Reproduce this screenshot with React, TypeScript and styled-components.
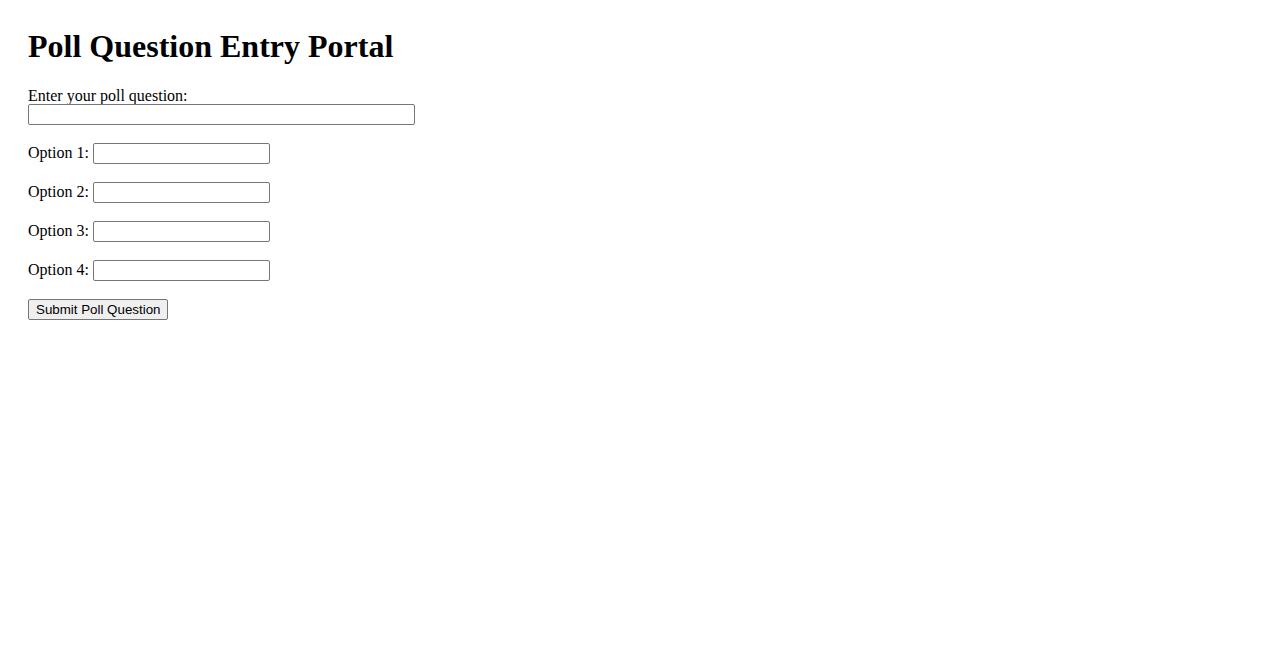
import React from "react";
import styled, { createGlobalStyle } from "styled-components";

const GlobalStyle = createGlobalStyle`
  body {
    margin: 0;
    padding: 28px;
    background: #ffffff;
    color: #000000;
    font-family: "Liberation Serif", "Times New Roman", serif;
    font-size: 16px;
  }
`;

const Page = styled.div`
  display: flex;
  flex-direction: column;
`;

const Title = styled.h1`
  margin: 0 0 22px;
  font-size: 32px;
  font-weight: bold;
  line-height: 37px;
`;

const Form = styled.form`
  display: flex;
  flex-direction: column;
  align-items: flex-start;
  gap: 18px;
`;

const QuestionField = styled.div`
  display: flex;
  flex-direction: column;
  align-items: flex-start;
`;

const Label = styled.label`
  line-height: 17px;
`;

const OptionRow = styled.div`
  display: flex;
  align-items: flex-start;
  gap: 4px;
  height: 21px;

  ${Label} {
    line-height: 20px;
  }
`;

const TextInput = styled.input<{ $wide?: boolean }>`
  box-sizing: border-box;
  width: ${(p) => (p.$wide ? "387px" : "177px")};
  height: 21px;
  padding: 1px 2px;
  border: 1px solid #767676;
  border-radius: 2px;
  background: #ffffff;
  font-family: "Liberation Sans", Arial, sans-serif;
  font-size: 13.33px;
`;

const SubmitButton = styled.button`
  box-sizing: border-box;
  height: 21px;
  padding: 1px 7px;
  border: 1px solid #767676;
  border-radius: 2px;
  background: #efefef;
  color: #000000;
  font-family: "Liberation Sans", Arial, sans-serif;
  font-size: 13.33px;
  line-height: 15px;
`;

const options = [1, 2, 3, 4];

export default function App() {
  return (
    <Page>
      <GlobalStyle />
      <Title>Poll Question Entry Portal</Title>
      <Form onSubmit={(e) => e.preventDefault()}>
        <QuestionField>
          <Label htmlFor="question">Enter your poll question:</Label>
          <TextInput id="question" type="text" $wide />
        </QuestionField>
        {options.map((n) => (
          <OptionRow key={n}>
            <Label htmlFor={`option${n}`}>Option {n}:</Label>
            <TextInput id={`option${n}`} type="text" />
          </OptionRow>
        ))}
        <SubmitButton type="submit">Submit Poll Question</SubmitButton>
      </Form>
    </Page>
  );
}
